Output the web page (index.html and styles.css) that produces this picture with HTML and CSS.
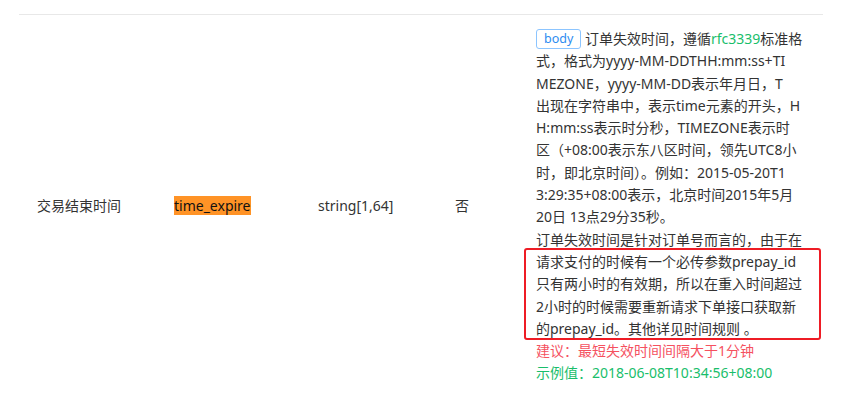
FILE: index.html
```html
<!DOCTYPE html>
<html lang="zh-CN">
<head>
<meta charset="utf-8">
<link rel="stylesheet" href="styles.css">
</head>
<body>
<div class="table">
  <div class="row">
    <div class="cell c1">交易结束时间</div>
    <div class="cell c2"><span class="hl">time_expire</span></div>
    <div class="cell c3">string[1,64]</div>
    <div class="cell c4">否</div>
    <div class="cell c5">
      <p class="desc"><span class="tag">body</span> 订单失效时间，遵循<span class="link">rfc3339</span>标准格<br>式，格式为yyyy-MM-DDTHH:mm:ss+TI<br>MEZONE，yyyy-MM-DD表示年月日，T<br>出现在字符串中，表示time元素的开头，H<br>H:mm:ss表示时分秒，TIMEZONE表示时<br>区（+08:00表示东八区时间，领先UTC8小<br>时，即北京时间）。例如：2015-05-20T1<br>3:29:35+08:00表示，北京时间2015年5月<br>20日 13点29分35秒。</p>
      <p class="desc">订单失效时间是针对订单号而言的，由于在<br>请求支付的时候有一个必传参数prepay_id<br>只有两小时的有效期，所以在重入时间超过<br>2小时的时候需要重新请求下单接口获取新<br>的prepay_id。其他详见时间规则 。</p>
      <p class="warn">建议：最短失效时间间隔大于1分钟</p>
      <p class="example">示例值：2018-06-08T10:34:56+08:00</p>
      <div class="mark"></div>
    </div>
  </div>
</div>
</body>
</html>
```
FILE: styles.css
```css
html, body {
  margin: 0;
  padding: 0;
  background: #fff;
}
body {
  font-family: "Noto Sans", "Noto Sans CJK SC", sans-serif;
  font-size: 14px;
  color: #333;
}
.table {
  margin: 14px 32px 0 19px;
  width: 804px;
  border-top: 1px solid #e8e8e8;
}
.row {
  display: grid;
  grid-template-columns: 137px 144px 137px 81px 305px;
  align-items: center;
}
.cell {
  padding: 13px 0 13px 18px;
  line-height: 22.3px;
}
.c5 {
  position: relative;
  padding-right: 10px;
  white-space: nowrap;
}
.hl {
  background: #ff9326;
  color: #111;
}
p {
  margin: 0;
}
.tag {
  display: inline-block;
  box-sizing: border-box;
  height: 20px;
  line-height: 18px;
  padding: 0 7px;
  border: 1px solid #8cc5ff;
  border-radius: 3px;
  color: #2d8cf0;
  font-size: 12.5px;
  vertical-align: 1px;
}
.link {
  color: #19be6b;
}
.warn {
  color: #f5515f;
}
.example {
  color: #19be6b;
}
.mark {
  position: absolute;
  left: 6px;
  right: 2px;
  top: 233px;
  height: 92px;
  border: 2px solid #ee1c25;
  border-radius: 3px;
  box-sizing: border-box;
}
```
